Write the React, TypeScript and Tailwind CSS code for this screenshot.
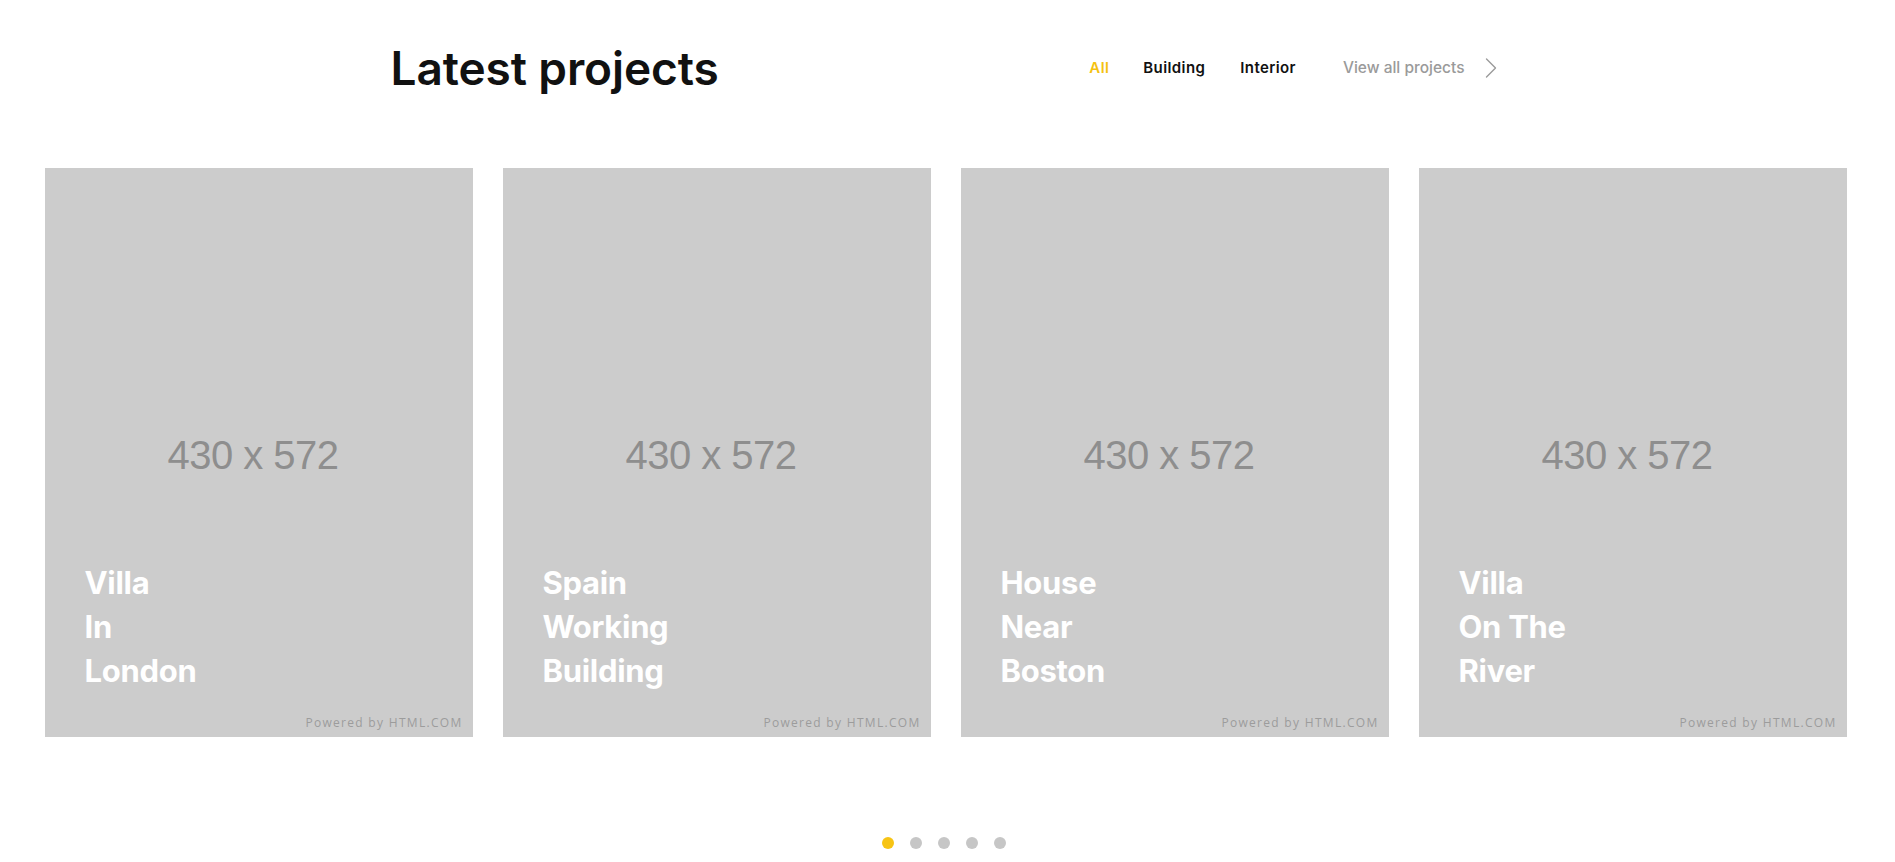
import { FiChevronRight } from 'react-icons/fi';

const projects = [
  { id: 1, lines: ['Villa', 'In', 'London'] },
  { id: 2, lines: ['Spain', 'Working', 'Building'] },
  { id: 3, lines: ['House', 'Near', 'Boston'] },
  { id: 4, lines: ['Villa', 'On The', 'River'] },
]

function ProjectCard({ lines }: { lines: string[] }) {
  return (
    <div className="relative w-[428px] h-[569px] shrink-0 bg-[#cccccc] flex items-center justify-center">
      <span className="-ml-[11px] mt-[4px] text-[40px] text-[#8e8e8e] font-['Liberation_Sans',Arial,sans-serif] tracking-[-0.5px]">
        430 x 572
      </span>
      <div className="absolute left-[40px] bottom-[44px] flex flex-col text-white text-[31px] leading-[44px] font-bold font-['Inter',sans-serif] tracking-[-0.3px]">
        {lines.map((l) => (
          <span key={l}>{l}</span>
        ))}
      </div>
      <span className="absolute right-[10px] bottom-[6px] text-[12px] leading-[16px] tracking-[1.3px] text-[#9c9c9c] font-['Open_Sans',sans-serif]">
        Powered by HTML.COM
      </span>
    </div>
  )
}

export default function App() {
  return (
    <div className="min-h-[862px] bg-white font-['Inter',sans-serif]">
      <div className="w-[1110px] mx-auto pt-[40px] flex items-center justify-between h-[96px]">
        <h2 className="-ml-[2px] text-[46px] leading-[56px] font-semibold text-[#111111] tracking-[-0.1px]">Latest projects</h2>
        <div className="flex items-center text-[15px] font-semibold tracking-[0.4px] -mr-[6px]">
          <button className="text-[#f5c211]">All</button>
          <button className="ml-[34px] text-[#111111]">Building</button>
          <button className="ml-[35px] text-[#111111]">Interior</button>
          <a className="ml-[47px] text-[15.5px] text-[#9a9a9a] font-medium tracking-[0px] flex items-center gap-[8px]">
            View all projects
            <FiChevronRight className="text-[36px] stroke-[0.9] text-[#9a9a9a]" />
          </a>
        </div>
      </div>

      <div className="mt-[72px] flex justify-center gap-[30px] pr-[4px]">
        {projects.map((p) => (
          <ProjectCard key={p.id} lines={p.lines} />
        ))}
      </div>

      <div className="mt-[100px] flex justify-center gap-[16px] pr-[7px]">
        <span className="w-[12px] h-[12px] rounded-full bg-[#f7c414]" />
        <span className="w-[12px] h-[12px] rounded-full bg-[#c6c6c6]" />
        <span className="w-[12px] h-[12px] rounded-full bg-[#c6c6c6]" />
        <span className="w-[12px] h-[12px] rounded-full bg-[#c6c6c6]" />
        <span className="w-[12px] h-[12px] rounded-full bg-[#c6c6c6]" />
      </div>
    </div>
  )
}
